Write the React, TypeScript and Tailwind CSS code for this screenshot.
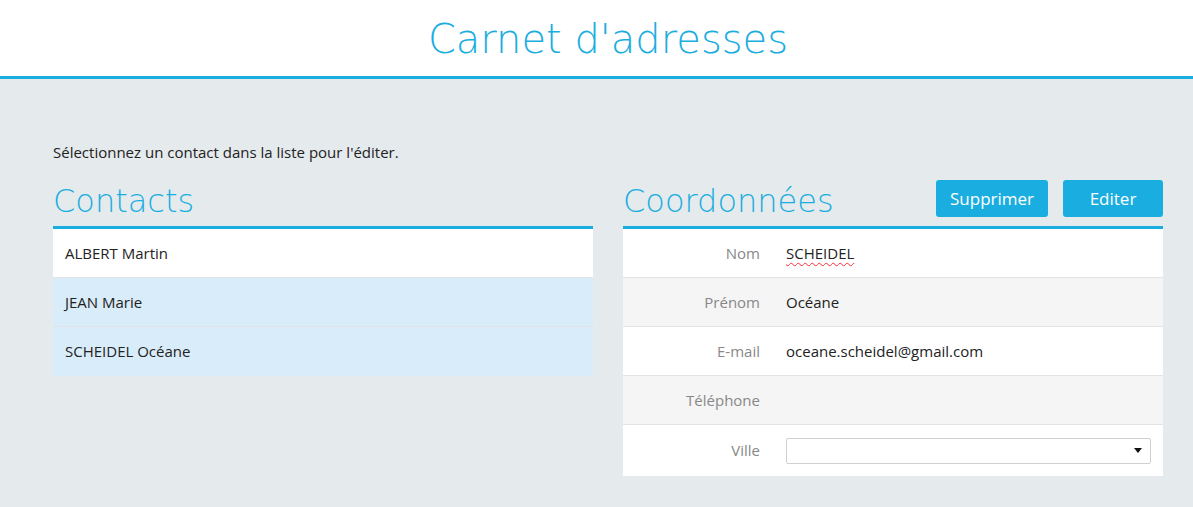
import React from "react";

const contacts = [
  { name: "ALBERT Martin", bg: "bg-white" },
  { name: "JEAN Marie", bg: "bg-[#d9ecf9]" },
  { name: "SCHEIDEL Océane", bg: "bg-[#d9ecf9]" },
];

const fields = [
  { label: "Nom", value: "SCHEIDEL", bg: "bg-white", spell: true },
  { label: "Prénom", value: "Océane", bg: "bg-[#f5f5f5]" },
  { label: "E-mail", value: "oceane.scheidel@gmail.com", bg: "bg-white" },
  { label: "Téléphone", value: "", bg: "bg-[#f5f5f5]" },
];

const heading = "font-['DejaVu_Sans',sans-serif] font-extralight text-[#1aaee0]";

export default function App() {
  return (
    <div className="min-h-[507px] bg-[#e5eaed] font-['Open_Sans',sans-serif] text-[15px] text-[#222]">
      <header className="bg-white h-[79px] border-b-[3px] border-[#1aaee0] flex items-center justify-center pl-[53px] pr-[30px]">
        <h1 className={`${heading} text-[40px] leading-none pt-[1px]`}>Carnet d'adresses</h1>
      </header>
      <main className="pl-[53px] pr-[30px] pt-[62px]">
        <p className="leading-[22px]">Sélectionnez un contact dans la liste pour l'éditer.</p>
        <div className="flex gap-[30px] mt-[19px]">
          <section className="flex-1">
            <div className="h-[47px] flex items-end border-b-[3px] border-[#1aaee0]">
              <h2 className={`${heading} text-[32px] leading-none pb-[9px]`}>Contacts</h2>
            </div>
            <ul>
              {contacts.map((c, i) => (
                <li
                  key={c.name}
                  className={`${c.bg} h-[49px] px-[12px] flex items-center ${i < contacts.length - 1 ? "border-b border-[#e3e3e3]" : ""}`}
                >
                  {c.name}
                </li>
              ))}
            </ul>
          </section>
          <section className="flex-1">
            <div className="h-[47px] flex items-end justify-between border-b-[3px] border-[#1aaee0]">
              <h2 className={`${heading} text-[32px] leading-none pb-[9px]`}>Coordonnées</h2>
              <div className="flex gap-[15px] pb-[9px]">
                <button className="w-[112px] h-[37px] rounded-[3px] bg-[#1aaee0] text-white text-[17px]">Supprimer</button>
                <button className="w-[100px] h-[37px] rounded-[3px] bg-[#1aaee0] text-white text-[17px]">Editer</button>
              </div>
            </div>
            <div>
              {fields.map((f) => (
                <div key={f.label} className={`${f.bg} h-[49px] flex items-center border-b border-[#e3e3e3]`}>
                  <div className="w-[137px] text-right text-[#888]">{f.label}</div>
                  <div className="pl-[26px]">
                    {f.spell ? (
                      <span className="underline decoration-wavy decoration-red-500 decoration-1 underline-offset-[3px]">{f.value}</span>
                    ) : (
                      f.value
                    )}
                  </div>
                </div>
              ))}
              <div className="bg-white h-[51px] flex items-center">
                <div className="w-[137px] text-right text-[#888]">Ville</div>
                <div className="pl-[26px] pr-[12px] flex-1">
                  <div className="h-[26px] border border-[#d0d0d0] rounded-[2px] bg-white flex items-center justify-end pr-[8px]">
                    <svg width="8" height="5" viewBox="0 0 8 5"><path d="M0 0h8L4 5z" fill="#111" /></svg>
                  </div>
                </div>
              </div>
            </div>
          </section>
        </div>
      </main>
    </div>
  );
}
